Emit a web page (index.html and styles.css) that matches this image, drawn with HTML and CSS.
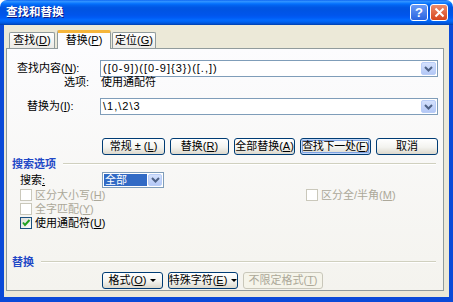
FILE: index.html
```html
<!DOCTYPE html>
<html lang="zh-CN">
<head>
    <meta charset="UTF-8">
    <meta name="viewport" content="width=device-width, initial-scale=1.0">
    <title>查找和替换</title>
    <link rel="stylesheet" href="styles.css">
</head>
<body>
    <div class="window">
        <div class="titlebar">
            <span class="title">查找和替换</span>
            <div class="caption-buttons">
                <span class="cap-btn help">?</span>
                <span class="cap-btn close">
                    <svg width="11" height="11" viewBox="0 0 11 11"><path d="M1.5 1.5 L9.5 9.5 M9.5 1.5 L1.5 9.5" stroke="#fff" stroke-width="2" fill="none"/></svg>
                </span>
            </div>
        </div>

        <div class="client">
            <div class="tabs">
                <div class="tab tab-find"><span>查找(<u>D</u>)</span></div>
                <div class="tab tab-replace active"><span>替换(<u>P</u>)</span></div>
                <div class="tab tab-goto"><span>定位(<u>G</u>)</span></div>
            </div>

            <div class="panel">
                <div class="field-row">
                    <label class="field-label label-find">查找内容(<u>N</u>):</label>
                    <div class="combo">
                        <span class="combo-text">([0-9])([0-9]{3})([.,])</span>
                        <span class="drop-btn">
                            <svg width="9" height="6" viewBox="0 0 9 6"><path d="M1 1 L4.5 4.5 L8 1" stroke="#4D6185" stroke-width="2" fill="none"/></svg>
                        </span>
                    </div>
                </div>

                <div class="option-row">
                    <span class="opt-label">选项:</span>
                    <span class="opt-value">使用通配符</span>
                </div>

                <div class="field-row replace-row">
                    <label class="field-label label-replace">替换为(<u>I</u>):</label>
                    <div class="combo">
                        <span class="combo-text">\1,\2\3</span>
                        <span class="drop-btn">
                            <svg width="9" height="6" viewBox="0 0 9 6"><path d="M1 1 L4.5 4.5 L8 1" stroke="#4D6185" stroke-width="2" fill="none"/></svg>
                        </span>
                    </div>
                </div>

                <div class="button-row">
                    <span class="btn w-less"><span>常规 ± (<u>L</u>)</span></span>
                    <span class="btn w-replace"><span>替换(<u>R</u>)</span></span>
                    <span class="btn w-all"><span>全部替换(<u>A</u>)</span></span>
                    <span class="btn w-next default"><span>查找下一处(<u>F</u>)</span></span>
                    <span class="btn w-cancel"><span>取消</span></span>
                </div>

                <div class="section">
                    <span class="section-title">搜索选项</span>
                    <span class="section-line"></span>
                </div>

                <div class="search-row">
                    <span class="search-label">搜索<u>:</u></span>
                    <div class="select">
                        <span class="select-value">全部</span>
                        <span class="drop-btn small">
                            <svg width="9" height="6" viewBox="0 0 9 6"><path d="M1 1 L4.5 4.5 L8 1" stroke="#4D6185" stroke-width="2" fill="none"/></svg>
                        </span>
                    </div>
                </div>

                <div class="checks">
                    <div class="check disabled"><span class="box"></span><span>区分大小写(<u>H</u>)</span></div>
                    <div class="check disabled right"><span class="box"></span><span>区分全/半角(<u>M</u>)</span></div>
                    <div class="check disabled"><span class="box"></span><span>全字匹配(<u>Y</u>)</span></div>
                    <div class="check">
                        <span class="box checked">
                            <svg width="10" height="10" viewBox="0 0 10 10"><path d="M2 4.5 L4 7 L8.5 2" stroke="#21A121" stroke-width="2" fill="none"/></svg>
                        </span>
                        <span>使用通配符(<u>U</u>)</span>
                    </div>
                </div>

                <div class="section section-bottom">
                    <span class="section-title">替换</span>
                    <span class="section-line"></span>
                </div>

                <div class="button-row bottom-row">
                    <span class="btn w-format"><span>格式(<u>O</u>)</span><span class="tri"></span></span>
                    <span class="btn w-special"><span>特殊字符(<u>E</u>)</span><span class="tri"></span></span>
                    <span class="btn w-noformat disabled"><span>不限定格式(<u>T</u>)</span></span>
                </div>
            </div>
        </div>
    </div>
</body>
</html>
```

FILE: styles.css
```css
* {
    box-sizing: border-box;
}

body {
    margin: 0;
    background: #ffffff;
    font-family: "Liberation Sans", "Noto Sans CJK SC", sans-serif;
    font-size: 11px;
    line-height: 13px;
    white-space: nowrap;
    color: #000000;
}

.window {
    width: 453px;
    height: 302px;
    display: flex;
    flex-direction: column;
}

/* XP blue caption */
.titlebar {
    height: 25px;
    border-radius: 7px 7px 0 0;
    background: linear-gradient(to bottom, #0058ee 0%, #3593ff 4%, #288eff 8%, #127dff 12%, #036ffc 16%, #0262ee 22%, #0057e5 30%, #0054e3 40%, #0055eb 60%, #005bf5 70%, #026afe 80%, #0062ef 88%, #0052d6 94%, #0040ab 100%);
    display: flex;
    align-items: center;
    justify-content: space-between;
    padding: 0 5px 0 6px;
}

.title {
    color: #ffffff;
    font-weight: bold;
    font-size: 11.5px;
    text-shadow: 1px 1px #0a1883;
}

.caption-buttons {
    display: flex;
    gap: 2px;
}

.cap-btn {
    width: 18px;
    height: 17px;
    border: 1px solid #ffffff;
    border-radius: 3px;
    display: flex;
    align-items: center;
    justify-content: center;
}

.help {
    background: linear-gradient(#6a9bf7, #2a63e0);
    color: #ffffff;
    font: bold 13px "Liberation Sans", sans-serif;
}

.close {
    background: linear-gradient(#ee8c6c, #d6441c);
}

.client {
    flex: 1;
    background: #ece9d8;
    border: 4px solid #0a4ad8;
    border-top: none;
    border-bottom-width: 5px;
    padding: 5px 5px 6px 2px;
    display: flex;
    flex-direction: column;
}

/* tabs */
.tabs {
    height: 18px;
    display: flex;
    align-items: flex-end;
    padding-left: 3px;
}

.tab {
    height: 16px;
    border: 1px solid #919b9c;
    border-bottom: none;
    border-radius: 2px 2px 0 0;
    background: linear-gradient(#ffffff, #ecebe6);
    display: flex;
    align-items: center;
    justify-content: center;
}

.tab-find {
    width: 46px;
    margin-right: 2px;
}

.tab-replace {
    width: 54px;
    margin-right: 1px;
}

.tab-goto {
    width: 44px;
}

.tab.active {
    height: 19px;
    margin-bottom: -1px;
    position: relative;
    z-index: 1;
    background: #fcfcfe;
    border-top: 3px solid #f5b53a;
    padding-bottom: 1px;
}

.panel {
    flex: 1;
    border: 1px solid #919b9c;
    background: linear-gradient(#fcfcfe, #f4f3ee);
    padding: 11px 4px 0 0;
    display: flex;
    flex-direction: column;
}

/* find / replace fields */
.field-row {
    display: flex;
    align-items: center;
    height: 17px;
    padding-right: 1px;
}

.replace-row {
    margin-top: 10px;
}

.field-label {
    width: 93px;
}

.label-find {
    padding-left: 10px;
}

.label-replace {
    padding-left: 20px;
}

.combo {
    flex: 1;
    height: 17px;
    border: 1px solid #7f9db9;
    background: #ffffff;
    display: flex;
    align-items: center;
    padding: 0 1px 0 2px;
}

.combo-text {
    letter-spacing: 1px;
}

.drop-btn {
    margin-left: auto;
    width: 15px;
    height: 13px;
    border: 1px solid #b9cdf7;
    border-radius: 2px;
    background: linear-gradient(#d4e1fd, #b4c8f6);
    display: flex;
    align-items: center;
    justify-content: center;
}

.option-row {
    display: flex;
    align-items: center;
    height: 12px;
    margin-top: -1px;
}

.opt-label {
    width: 93px;
    text-align: right;
    padding-right: 11px;
}

.opt-value {
    padding-left: 1px;
}

/* push buttons */
.button-row {
    display: flex;
    gap: 5px;
    margin-top: 23px;
    padding-left: 95px;
}

.btn {
    height: 17px;
    border: 1px solid #003c74;
    border-radius: 3px;
    background: linear-gradient(#ffffff, #f3f3ef 55%, #dcd8cc);
    display: flex;
    align-items: center;
    justify-content: center;
    gap: 4px;
}

.btn.default {
    box-shadow: inset 0 0 0 1px #c4d8f8, inset 0 0 0 2px #7fa3e2;
    letter-spacing: -0.3px;
}

.btn.disabled {
    border-color: #c9c7ba;
    background: #f5f4ea;
    color: #aca899;
}

.w-less { width: 63px; }
.w-replace { width: 59px; }
.w-all { width: 61px; }
.w-next { width: 71px; }
.w-cancel { width: 62px; }
.w-format { width: 61px; }
.w-special { width: 70px; }
.w-noformat { width: 80px; }

.tri {
    width: 0;
    height: 0;
    border-left: 3px solid transparent;
    border-right: 3px solid transparent;
    border-top: 3px solid #000000;
}

/* section headings */
.section {
    display: flex;
    align-items: center;
    height: 14px;
    margin-top: 2px;
    padding-left: 5px;
    padding-right: 3px;
}

.section-bottom {
    margin-top: 25px;
}

.section-title {
    color: #1f48c6;
    font-weight: bold;
}

.section-line {
    flex: 1;
    height: 2px;
    margin-left: 7px;
    border-top: 1px solid #d0d0bf;
    border-bottom: 1px solid #ffffff;
}

.search-row {
    display: flex;
    align-items: center;
    height: 16px;
    margin-top: 1px;
    padding-left: 13px;
}

.search-label {
    width: 82px;
}

.select {
    width: 62px;
    height: 16px;
    border: 1px solid #7f9db9;
    background: #ffffff;
    display: flex;
    align-items: center;
    padding: 1px;
}

.select-value {
    flex: 1;
    height: 12px;
    line-height: 12px;
    background: #316ac5;
    color: #ffffff;
    padding-left: 1px;
    margin-right: 1px;
}

.drop-btn.small {
    height: 12px;
    width: 14px;
}

/* checkboxes */
.checks {
    display: grid;
    grid-template-columns: 286px auto;
    padding-left: 13px;
}

.check {
    grid-column: 1;
    display: flex;
    align-items: center;
    gap: 3px;
    height: 14px;
}

.check.right {
    grid-column: 2;
    grid-row: 1;
}

.check.disabled {
    color: #aca899;
}

.box {
    width: 12px;
    height: 12px;
    border: 1px solid #1c5180;
    background: linear-gradient(135deg, #dcdcd7, #ffffff);
    display: flex;
    align-items: center;
    justify-content: center;
}

.check.disabled .box {
    border-color: #cac8bb;
    background: #ffffff;
}

.bottom-row {
    margin-top: 3px;
}
```
